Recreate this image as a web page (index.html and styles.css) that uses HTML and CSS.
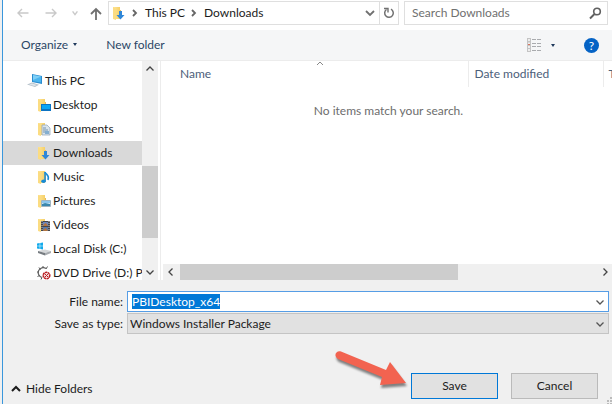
FILE: index.html
```html
<!DOCTYPE html>
<html lang="en">
<head>
<meta charset="utf-8">
<title>Save As</title>
<link rel="stylesheet" href="styles.css">
</head>
<body>
<svg class="defs" aria-hidden="true">
  <defs>
    <linearGradient id="gold" x1="0" x2="1"><stop offset="0" stop-color="#ffe79a"/><stop offset="1" stop-color="#f5cf68"/></linearGradient>
    <symbol id="folder" viewBox="0 0 14 14"><path d="M1 1h7v12H1z" fill="url(#gold)"/><path d="M1 1l3 2v11l-3-1z" fill="#fbdc82"/><path d="M8 4h1v8H8z" fill="#e7bd56"/></symbol>
    <symbol id="down" viewBox="0 0 14 14"><use href="#folder"/><path d="M7 5h3v4h2.500L8.500 13.500 4.500 9H7z" fill="#2f87d8"/></symbol>
    <symbol id="chev" viewBox="0 0 10 10"><path d="M1.500 3.500L5 7l3.500-3.500" fill="none" stroke="currentColor" stroke-width="1.300"/></symbol>
  </defs>
</svg>
<div class="dialog">
  <nav class="address-row" aria-label="Location">
    <button class="nav back" aria-label="Back" disabled><svg width="12" height="12" viewBox="0 0 12 12"><path d="M11.500 6H1M5 2L1 6l4 4" fill="none" stroke="currentColor" stroke-width="1.400"/></svg></button>
    <button class="nav forward" aria-label="Forward" disabled><svg width="12" height="12" viewBox="0 0 12 12"><path d="M.500 6H11M7 2l4 4-4 4" fill="none" stroke="currentColor" stroke-width="1.400"/></svg></button>
    <button class="nav recent" aria-label="Recent locations" disabled><svg width="8" height="8" viewBox="0 0 10 10"><path d="M2 3l3 4 3-4" fill="none" stroke="currentColor" stroke-width="1.800"/></svg></button>
    <button class="nav up" aria-label="Up"><svg width="12" height="13" viewBox="0 0 12 13"><path d="M6 13V2M1 7l5-5 5 5" fill="none" stroke="currentColor" stroke-width="1.800"/></svg></button>
    <div class="address">
      <svg class="place" width="14" height="14"><use href="#down"/></svg>
      <svg class="sep" width="6" height="8" viewBox="0 0 6 8"><path d="M1 1l3 3-3 3" fill="none" stroke="currentColor" stroke-width="1.800"/></svg>
      <a href="#pc">This PC</a>
      <svg class="sep" width="6" height="8" viewBox="0 0 6 8"><path d="M1 1l3 3-3 3" fill="none" stroke="currentColor" stroke-width="1.800"/></svg>
      <a href="#downloads">Downloads</a>
      <button class="history" aria-label="Previous locations"><svg width="10" height="8" viewBox="0 0 10 8"><path d="M1 2l4 4 4-4" fill="none" stroke="currentColor" stroke-width="1.800"/></svg></button>
      <button class="refresh" aria-label="Refresh"><svg width="12" height="12" viewBox="0 0 12 12"><path d="M3.500 2.500A4.300 4.300 0 1 0 8 2.200" fill="none" stroke="currentColor" stroke-width="1.500"/><path d="M1 1.500h4v4" fill="none" stroke="currentColor" stroke-width="1.400"/></svg></button>
    </div>
    <div class="search">
      <input type="search" aria-label="Search Downloads" placeholder="Search Downloads">
      <svg width="13" height="13" viewBox="0 0 13 13"><circle cx="8" cy="4.500" r="3.300" fill="none" stroke="currentColor" stroke-width="1.600"/><path d="M5.500 7L1 11.500" stroke="currentColor" stroke-width="2"/></svg>
    </div>
  </nav>

  <div class="toolbar">
    <button class="organize">Organize<span class="tri"></span></button>
    <button>New folder</button>
    <button class="view" aria-label="Change view"><svg width="14" height="14" viewBox="0 0 14 14"><path d="M0 0h4v14H0z" fill="#c4c4c4"/><path d="M1 1h2v2H1zm0 3.500h2v2H1zM1 8h2v2H1zm0 3h2v2H1z" fill="#eee"/><path d="M1 6h2v1H1z" fill="#d9745d"/><path d="M5 1.500h4M10 1.500h4M5 5.500h4M10 5.500h4M5 8.500h4M10 8.500h4M5 12.500h4M10 12.500h4" stroke="#a9abae"/></svg><span class="tri"></span></button>
    <button class="help" aria-label="Help">?</button>
  </div>

  <main class="browser">
    <ul class="tree">
      <li class="root"><svg width="16" height="14" viewBox="0 0 16 14"><path d="M5 0l10 2v8L5 8z" fill="#2b8ccf"/><path d="M6 1l8 1.600v6L6 7.200z" fill="#4bb5ee"/><path d="M6 1l8 1.600L6 6z" fill="#7fd0f7"/><path d="M0 10.500l5-2 7 2.300-4 2.200z" fill="#b7c2cb"/><path d="M2 10.500l3-1 5 1.500-2.500 1z" fill="#e0e7ec"/></svg>This PC</li>
      <li><svg width="14" height="14" viewBox="0 0 14 14"><use href="#folder"/><path d="M4 6h10v7H4z" fill="#0c73c2"/><path d="M5 7h8v4H5z" fill="#09a5f5"/></svg>Desktop</li>
      <li><svg width="14" height="14" viewBox="0 0 14 14"><use href="#folder"/><path d="M5 3h5l3 3v7H5z" fill="#d9e4ec" stroke="#8da2b4" stroke-width=".700"/><path d="M6 6h3M6 8h5M6 10h2" stroke="#7594ad"/><path d="M8 9h4v3H8z" fill="#83aed0"/></svg>Documents</li>
      <li class="current"><svg width="14" height="14"><use href="#down"/></svg>Downloads</li>
      <li><svg width="14" height="14" viewBox="0 0 14 14"><use href="#folder"/><path d="M8 2v9" stroke="#168bd8" stroke-width="1.500"/><ellipse cx="6.500" cy="11.300" rx="2.300" ry="1.800" fill="#168bd8"/><path d="M8 2c1 3 5 3 3 8" fill="none" stroke="#168bd8" stroke-width="1.500"/></svg>Music</li>
      <li><svg width="14" height="14" viewBox="0 0 14 14"><use href="#folder"/><path d="M4.500 6.500h9v6h-9z" fill="#dff1fa" stroke="#9fb3c1"/><path d="M5 10l3-1 5 1v2H5z" fill="#3a87ad"/><path d="M5 7h8v2H5z" fill="#8bc6ed"/></svg>Pictures</li>
      <li><svg width="14" height="14" viewBox="0 0 14 14"><use href="#folder"/><path d="M4 3h9v10H4z" fill="#45474c"/><path d="M6 4h5v4H6z" fill="#6b87bd"/><path d="M6 9h5v4H6z" fill="#587baa"/><path d="M7 6l2-1 2 3H6zM7 11l2-1 2 3H6z" fill="#b3743e"/><path d="M5 3v10M12 3v10" stroke="#c7c9cb" stroke-dasharray="1 1"/></svg>Videos</li>
      <li><svg width="14" height="14" viewBox="0 0 14 14"><path d="M0 1.500L2.700 1v2.700H0zM3.200 1L6 .500v3.200H3.200zM0 4.200h2.700V7L0 6.500zM3.200 4.200H6v3.300L3.200 7z" fill="#12aaeb"/><path d="M1 9l7-1.500 6 1.500-6 2z" fill="#d4d7d9"/><path d="M1 9l7 2v2.500L1 11z" fill="#777c81"/><path d="M8 11l6-2v2l-6 2.500z" fill="#a7abaf"/></svg>Local Disk (C:)</li>
      <li><svg width="14" height="14" viewBox="0 0 14 14"><path d="M9 2.500A5 5 0 1 0 5 11.500" fill="none" stroke="#666" stroke-width="1.200"/><path d="M2 1.500l1.500 2M0 6h2M.500 11l2-2M6 0v2M10.500 .500L9 3M4 13.500l1-2" stroke="#555"/><circle cx="9.500" cy="9.500" r="3.300" fill="#f6dede" stroke="#ba2025" stroke-width="1.500" stroke-dasharray="2.200 .500"/><path d="M7.500 7.500l4 4M11.500 7.500l-4 4" stroke="#ba2025"/></svg>DVD Drive (D:) Pa</li>
    </ul>
    <div class="vbar">
      <svg class="flip" width="10" height="10"><use href="#chev"/></svg>
      <div class="vtrack"><div class="vthumb"></div></div>
      <svg width="10" height="10"><use href="#chev"/></svg>
    </div>
    <section class="files">
      <table>
        <thead><tr><th class="name" scope="col">Name<svg class="sort" width="8" height="5" viewBox="0 0 8 5"><path d="M1 4l3-3 3 3" fill="none" stroke="#888"/></svg></th><th class="date" scope="col">Date modified</th><th class="type" scope="col">T</th></tr></thead>
      </table>
      <p>No items match your search.</p>
      <div class="hbar">
        <svg class="left" width="10" height="10"><use href="#chev"/></svg>
        <div class="htrack"><div class="hthumb"></div></div>
        <svg class="right" width="10" height="10"><use href="#chev"/></svg>
      </div>
    </section>
  </main>

  <form class="form">
    <label for="filename">File name:</label>
    <div class="field">
      <input id="filename" type="text" value="PBIDesktop_x64" autocomplete="off" spellcheck="false">
      <svg width="10" height="10"><use href="#chev"/></svg>
    </div>
    <label for="filetype">Save as type:</label>
    <div class="field">
      <select id="filetype"><option>Windows Installer Package</option></select>
      <svg width="10" height="10"><use href="#chev"/></svg>
    </div>
  </form>

  <footer class="actions">
    <button class="hide"><svg width="10" height="8" viewBox="0 0 10 8"><path d="M1 6l4-4 4 4" fill="none" stroke="currentColor" stroke-width="2"/></svg>Hide Folders</button>
    <div class="buttons">
      <button class="push primary">Save</button>
      <button class="push">Cancel</button>
      <svg class="pointer" width="80" height="46" viewBox="0 0 80 46"><path d="M11 2.500L56 21l4-8 16 21-26 2 2-8L8 10C3 7 6 1 11 2.500z" fill="#f26350"/></svg>
    </div>
    <svg class="grip" width="7" height="7" viewBox="0 0 7 7"><path d="M5 0h2v2H5zM2 3h2v2H2zM5 3h2v2H5zM2 6h2v1H2zM5 6h2v1H5z" fill="#bbb"/></svg>
  </footer>
</div>
<script src="dialog.js"></script>
</body>
</html>
```
FILE: dialog.js
```js
const filename = document.getElementById("filename");
filename.focus();
filename.select();
```
FILE: styles.css
```css
* { box-sizing: border-box; }
body { margin: 0; font: 12px/16px Lato, "Noto Sans", sans-serif; color: #1c1c1c; background: #f0f0f0; }
button, input, select { font: inherit; color: inherit; margin: 0; }
button { border: 0; padding: 0; background: none; }
svg { display: block; flex: none; }
.defs { position: absolute; width: 0; height: 0; }
.dialog { display: flex; flex-direction: column; height: 100vh; margin-left: 2px; border-left: 1px solid #3a97dc; overflow: hidden; }

.address-row { display: flex; align-items: flex-start; height: 30px; flex: none; padding: 1px 4px 0 14px; background: #fff; }
.nav { display: flex; align-items: center; height: 24px; color: #707070; }
.nav:disabled { color: #c9c9c9; }
.forward { margin-left: 16px; }
.recent { margin-left: 14px; }
.up { margin: 0 6px 0 11px; }
.address { display: flex; align-items: center; flex: 291 1 291px; height: 24px; border: 1px solid #dfdfdf; padding-left: 3px; }
.address a { color: inherit; text-decoration: none; }
.sep { color: #666; margin: 0 7px 0 6px; }
.history { margin: 0 4px 0 auto; color: #707070; }
.refresh { display: flex; align-items: center; justify-content: center; align-self: stretch; width: 19px; border-left: 1px solid #dfdfdf; color: #707070; }
.search { display: flex; align-items: center; flex: 204 1 204px; height: 24px; margin-left: 5px; padding: 0 5px 0 7px; border: 1px solid #dfdfdf; color: #606060; }
.search input { flex: 1; min-width: 0; border: 0; padding: 0; background: none; outline: 0; appearance: none; }
.search input::placeholder { color: #707070; opacity: 1; }

.toolbar { display: flex; align-items: center; height: 31px; flex: none; padding: 0 13px 0 18px; background: #f5f6f7; border-bottom: 1px solid #ececec; color: #2b4666; }
.organize { margin-right: 29px; }
.tri { display: inline-block; margin-left: 5px; border: 2px solid transparent; border-top: 3px solid #1e395b; border-bottom: 0; vertical-align: 3px; }
.view { display: flex; align-items: center; margin-left: auto; }
.view .tri { margin-left: 10px; }
.help { width: 15px; height: 15px; margin-left: 29px; border-radius: 50%; background: #0563c5; color: #fff; line-height: 15px; }

.browser { display: flex; flex: 1; min-height: 0; background: #fff; }
.tree { flex: none; width: 139px; margin: 0; padding: 8px 0 0; list-style: none; overflow: hidden; }
.tree li { display: flex; align-items: center; gap: 2px; height: 24px; padding-left: 34px; white-space: nowrap; }
.tree .root { padding-left: 24px; }
.tree .current { background: #d9d9d9; }
.vbar { display: flex; flex-direction: column; align-items: center; width: 16px; flex: none; padding: 3px 0; background: #f0f0f0; color: #444; }
.vtrack { display: flex; flex-direction: column; justify-content: flex-end; flex: 1; width: 100%; padding-bottom: 29px; }
.vthumb { height: 44%; background: #cdcdcd; }
.flip { transform: rotate(180deg); }
.files { display: flex; flex-direction: column; flex: 1; min-width: 0; margin-left: 2px; border-left: 1px solid #ececec; overflow: hidden; }
table { width: 100%; border-collapse: collapse; table-layout: fixed; }
th { position: relative; height: 26px; padding: 0 0 0 6px; text-align: left; font-weight: 400; color: #4c607a; border-right: 1px solid #ececec; white-space: nowrap; overflow: hidden; }
.name { padding-left: 19px; }
.date { width: 135px; }
.type { width: 9px; border-right: 0; padding-left: 5px; }
.sort { position: absolute; top: 0; left: 50%; margin-left: 2px; }
.files p { flex: 1; margin: 0; padding: 16px 0 0 4px; text-align: center; color: #6d6d6d; }
.hbar { display: flex; align-items: center; height: 16px; margin-left: 2px; padding: 0 2px 0 3px; background: #f0f0f0; color: #444; }
.htrack { flex: 1; height: 100%; margin: 0 5px 0 4px; }
.hthumb { width: 67%; height: 100%; background: #cdcdcd; }
.left { transform: rotate(90deg); }
.right { transform: rotate(-90deg); }

.form { display: grid; grid-template-columns: 120px 1fr; column-gap: 4px; row-gap: 1px; align-items: center; margin: 0; padding: 11px 3px 0 0; }
.form label { text-align: right; }
.field { display: grid; align-items: center; }
.field > * { grid-area: 1 / 1; min-width: 0; }
.field svg { justify-self: end; margin-right: 4px; color: #555; pointer-events: none; }
.field input, .field select { width: 100%; height: 21px; border-radius: 0; outline: 0; appearance: none; }
.field input { padding: 0 20px 0 4px; border: 1px solid #569de5; background: #fff; }
.field input::selection { background: #0078d7; color: #fff; }
.field select { padding: 0 20px 0 2px; border: 1px solid #c4c4c4; background: #e1e1e1; }

.actions { position: relative; display: flex; justify-content: space-between; align-items: flex-start; height: 70px; padding: 39px 14px 0 8px; }
.hide { display: flex; align-items: center; gap: 5px; height: 31px; }
.buttons { position: relative; display: flex; gap: 13px; }
.push { width: 87px; height: 26px; border: 1px solid #bababa; background: #e1e1e1; }
.primary { border-color: #0078d7; }
.pointer { position: absolute; top: -24px; right: 188px; filter: drop-shadow(1px 3px 1px #0007); }
.grip { position: absolute; right: 0; bottom: 0; }
```
